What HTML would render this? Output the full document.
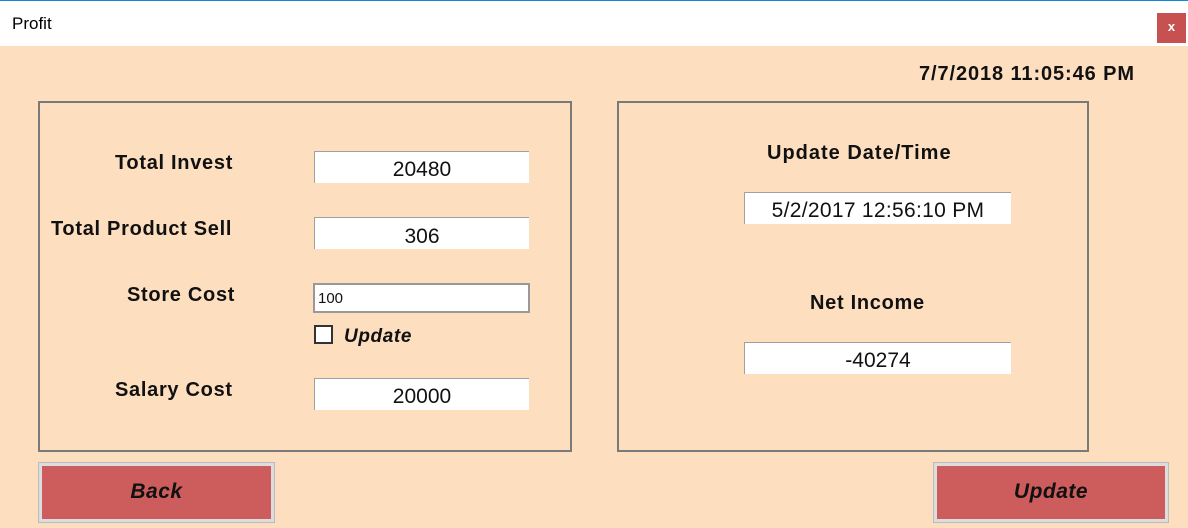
<!DOCTYPE html>
<html><head><style>
*{margin:0;padding:0;box-sizing:border-box}
body{width:1188px;height:528px;position:relative;background:#fddfc0;font-family:"Liberation Sans",Arial,sans-serif;overflow:hidden}
.a{position:absolute;white-space:nowrap}
.lbl{font-weight:bold;font-size:20px;letter-spacing:0.7px;color:#111}
.tb{position:absolute;background:#fff;border-top:1px solid #a0a0a0;border-left:1px solid #a0a0a0;font-size:21px;text-align:center;color:#111;white-space:nowrap}
.grp{position:absolute;border:2px solid #7a7a7a}
.btn{position:absolute;background:#cd5c5c;border:3px solid #ddd;outline:1px solid #bbb;font-weight:bold;font-style:italic;font-size:21px;letter-spacing:0.5px;text-align:center;line-height:52px;color:#111}
</style></head><body>
<div class="a" style="left:0;top:0;width:1188px;height:46px;background:#fff;border-top:1px solid #1883d7"></div>
<div class="a" style="left:12px;top:14px;font-size:17px;color:#000">Profit</div>
<div class="a" style="left:1157px;top:13px;width:29px;height:30px;background:#c75050;color:#fff;font-weight:bold;font-size:13px;text-align:center;line-height:28px">x</div>
<div class="a lbl" style="left:919px;top:63px;letter-spacing:0.9px">7/7/2018 11:05:46 PM</div>

<div class="grp" style="left:38px;top:101px;width:534px;height:351px"></div>
<div class="grp" style="left:617px;top:101px;width:472px;height:351px"></div>

<div class="a lbl" style="left:115px;top:152px">Total Invest</div>
<div class="a lbl" style="left:51px;top:218px">Total Product Sell</div>
<div class="a lbl" style="left:127px;top:284px">Store Cost</div>
<div class="a lbl" style="left:115px;top:379px">Salary Cost</div>

<div class="tb" style="left:314px;top:151px;width:215px;height:32px;line-height:35px">20480</div>
<div class="tb" style="left:314px;top:217px;width:215px;height:32px;line-height:37px">306</div>
<div class="tb" style="left:313px;top:283px;width:217px;height:30px;border:2px solid #999;text-align:left;font-size:15px;line-height:27px;padding-left:3px">100</div>
<div class="a" style="left:314px;top:325px;width:19px;height:19px;border:2px solid #333;background:#fff"></div>
<div class="a" style="left:344px;top:326px;font-weight:bold;font-style:italic;font-size:19px;letter-spacing:0.6px;color:#111">Update</div>
<div class="tb" style="left:314px;top:378px;width:215px;height:32px;line-height:35px">20000</div>

<div class="a lbl" style="left:767px;top:142px;letter-spacing:1px">Update Date/Time</div>
<div class="tb" style="left:744px;top:192px;width:267px;height:32px;line-height:35px;font-size:21px;letter-spacing:0.3px">5/2/2017 12:56:10 PM</div>
<div class="a lbl" style="left:810px;top:292px">Net Income</div>
<div class="tb" style="left:744px;top:342px;width:267px;height:32px;line-height:35px;font-size:21px">-40274</div>

<div class="btn" style="left:39px;top:463px;width:235px;height:59px">Back</div>
<div class="btn" style="left:934px;top:463px;width:234px;height:59px">Update</div>
</body></html>
